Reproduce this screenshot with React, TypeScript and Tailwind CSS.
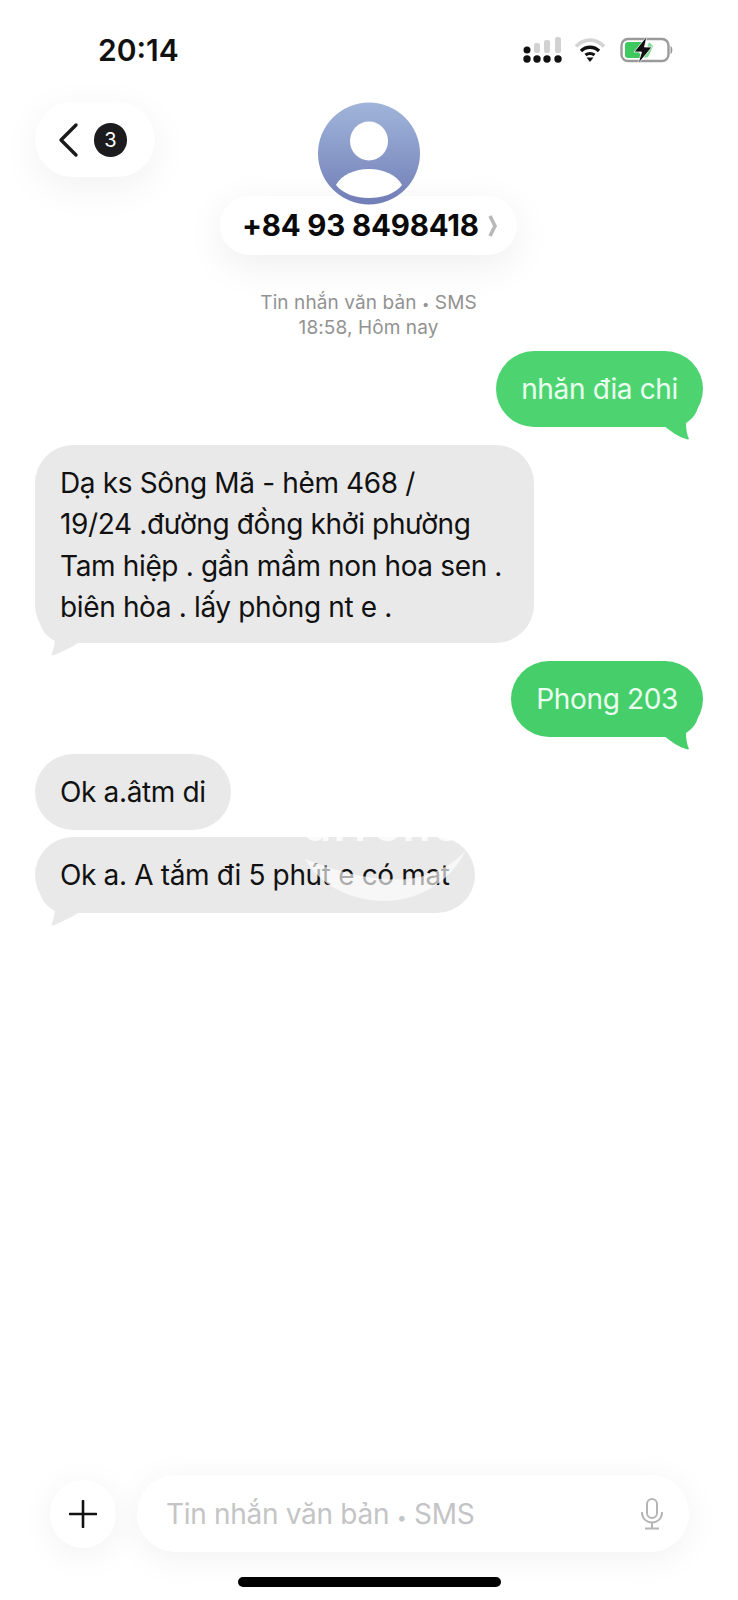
const Tail = ({ side, color }: { side: "left" | "right"; color: string }) =>
  side === "left" ? (
    <svg className="absolute left-0 top-full -mt-[26px]" width="50" height="40" viewBox="0 0 50 40">
      <path d="M5 5 C6 13 12 20 20 24 C19 29 18 34 16.5 38 L18 38.5 C26 35 36 31 46 24 Z" fill={color} />
    </svg>
  ) : (
    <svg className="absolute right-0 top-full -mt-[26px]" width="50" height="40" viewBox="0 0 50 40">
      <path d="M45 5 C44 13 39 18 33 22 C33 28 34 34 36 38 L34.5 38.5 C26 36 18 31 10 24 Z" fill={color} />
    </svg>
  );

const Sent = ({ text, color }: { text: string; color: string }) => (
  <div className="flex justify-end pr-[35px]">
    <div
      className="relative flex h-[76px] items-center rounded-[38px] px-[25px] text-[28px] tracking-[-0.35px] text-[#eafff0]"
      style={{ backgroundColor: color }}
    >
      {text}
      <Tail side="right" color={color} />
    </div>
  </div>
);

const Received = ({ children, tail }: { children: React.ReactNode; tail?: boolean }) => (
  <div className="flex justify-start pl-[35px]">
    <div className="relative flex min-h-[76px] items-center rounded-[38px] bg-[#e9e9e9] px-[25px] text-[28px] leading-[41.3px] tracking-[-0.35px] text-[#111111]">
      {children}
      {tail && <Tail side="left" color="#e9e9e9" />}
    </div>
  </div>
);

const StatusIcons = () => (
  <div className="flex items-center">
    <svg width="40" height="26" viewBox="0 0 40 26">
      <rect x="0.5" y="9.5" width="7" height="7" rx="3.5" fill="#111" />
      <rect x="11" y="6" width="6" height="10" rx="2" fill="#d2d2d2" />
      <rect x="21" y="3" width="6" height="13" rx="2" fill="#d2d2d2" />
      <rect x="32" y="0" width="6" height="16" rx="2" fill="#d2d2d2" />
      <circle cx="4" cy="22" r="3.7" fill="#111" />
      <circle cx="14" cy="22" r="3.7" fill="#111" />
      <circle cx="24" cy="22" r="3.7" fill="#111" />
      <circle cx="35" cy="22" r="3.7" fill="#111" />
    </svg>
    <svg className="ml-[11px]" width="32" height="24" viewBox="0 0 32 24">
      <path d="M2 8.5 C10 0 22 0 30 8.5" stroke="#d4d4d4" strokeWidth="3.6" fill="none" />
      <path d="M7 13 C12 8 20 8 25 13" stroke="#111" strokeWidth="3.4" fill="none" />
      <path d="M11.5 17 C14 15 18 15 20.5 17" stroke="#111" strokeWidth="3.2" fill="none" />
      <path d="M12.5 19.5 L19.5 19.5 L16 24 Z" fill="#111" />
    </svg>
    <svg className="ml-[14px]" width="54" height="28" viewBox="0 0 54 28">
      <rect x="1.5" y="3" width="47" height="22" rx="6.5" fill="none" stroke="#9a9a9a" strokeWidth="2.4" />
      <path d="M5 9 a3 3 0 0 1 3 -3 H24 L18 14 L22 22 H8 a3 3 0 0 1 -3 -3 Z" fill="#3ec95f" />
      <path d="M29 6 L33 10 L31 15 L28 21 L24 22 Z" fill="#7ddc92" />
      <path d="M27 0 L14 16 H21.5 L18 28 L32 11 H24.5 Z" fill="#111" stroke="#fff" strokeWidth="0.8" />
      <path d="M50.5 10 C53 11 53 17 50.5 18 Z" fill="#9a9a9a" />
    </svg>
  </div>
);

const Avatar = () => (
  <svg width="104" height="103" viewBox="0 0 104 103" className="relative z-10 block">
    <defs>
      <linearGradient id="avatarFill" x1="0" y1="0" x2="0" y2="1">
        <stop offset="0" stopColor="#a0b5da" />
        <stop offset="1" stopColor="#727eb7" />
      </linearGradient>
    </defs>
    <circle cx="52" cy="51.5" r="51" fill="url(#avatarFill)" />
    <ellipse cx="52" cy="39" rx="19" ry="19.5" fill="#fff" />
    <path d="M19 83 C24 73 38 67 52 67 C66 67 80 73 85 83 C78 92 65 96 52 96 C39 96 26 92 19 83 Z" fill="#fff" />
  </svg>
);

export default function App() {
  return (
    <div
      className="flex h-[1600px] w-[738px] flex-col overflow-hidden bg-white"
      style={{ fontFamily: "Inter, 'Noto Sans', sans-serif" }}
    >
      {/* status bar */}
      <div className="flex h-[102px] items-start justify-between pl-[98px] pr-[64px] pt-[31px]">
        <span className="text-[30px] font-semibold leading-[38px] text-[#111]">20:14</span>
        <div className="pt-[5px]">
          <StatusIcons />
        </div>
      </div>

      {/* header */}
      <div className="flex items-start pl-[35px]">
        <div className="flex h-[75px] w-[120px] items-center rounded-[38px] bg-white pl-[21px] shadow-[0_10px_40px_rgba(0,0,0,0.06)]">
          <svg width="24" height="36" viewBox="0 0 24 36">
            <path d="M20 3 L5 18 L20 33" stroke="#1a1a1a" strokeWidth="3.4" fill="none" strokeLinecap="round" strokeLinejoin="round" />
          </svg>
          <span className="ml-[14px] flex h-[34px] w-[33px] items-center justify-center rounded-full bg-[#1c1c1e] text-[20px] text-white">
            3
          </span>
        </div>
        <div className="ml-[65px] flex w-[297px] flex-col items-center">
          <Avatar />
          <div className="-mt-[9px] flex h-[59px] w-[297px] items-center rounded-[30px] bg-white pl-[22px] shadow-[0_10px_40px_rgba(0,0,0,0.07)]">
            <span className="text-[29.5px] font-bold tracking-[-0.2px] text-[#0a0a0a]">+84 93 8498418</span>
            <svg className="ml-[9px]" width="10" height="22" viewBox="0 0 10 22">
              <path d="M2 1 L7 11 L2 21" stroke="#b8b8b8" strokeWidth="3.6" fill="none" />
            </svg>
          </div>
          <div className="mt-[36px] whitespace-nowrap text-center text-[19px] leading-[24px] tracking-[0.1px] text-[#929292]">
            <div>
              Tin nhắn văn bản <span className="text-[13px]">•</span> SMS
            </div>
            <div>18:58, Hôm nay</div>
          </div>
        </div>
      </div>

      {/* messages */}
      <div className="mt-[11px] flex flex-col">
        <Sent text="nhăn đia chi" color="#4dd471" />
        <div className="mt-[18px]">
          <Received tail>
            <div className="w-[449px] pb-[15px] pt-[18px]">
              <div>Dạ ks Sông Mã - hẻm 468 /</div>
              <div>19/24 .đường đồng khởi phường</div>
              <div>Tam hiệp . gần mầm non hoa sen .</div>
              <div>biên hòa . lấy phòng nt e .</div>
            </div>
          </Received>
        </div>
        <div className="mt-[18px]">
          <Sent text="Phong 203" color="#45ce69" />
        </div>
        <div className="mt-[17px]">
          <Received>Ok a.âtm di</Received>
        </div>
        <div className="mt-[7px]">
          <Received tail>
            Ok a. A tắm đi 5 phút e có mat
            {/* watermark washed over the bubble */}
            <div className="absolute left-[270px] top-[-36px] text-[46px] font-semibold leading-[46px] tracking-[2px] text-white/80">
              arrenow
            </div>
            <svg className="absolute left-0 top-0" width="480" height="76" viewBox="0 0 480 76">
              <path
                d="M270 22 C285 48 315 64 350 64 C385 64 418 42 430 14 C418 28 400 36 385 40 C360 46 320 42 270 22 Z"
                fill="#ffffff"
                fillOpacity="0.65"
              />
            </svg>
          </Received>
        </div>
      </div>

      <div className="flex-1" />

      {/* composer */}
      <div className="flex items-center pl-[50px] pr-[49px]">
        <div className="flex h-[68px] w-[66px] items-center justify-center rounded-full bg-white shadow-[0_6px_36px_rgba(0,0,0,0.06)]">
          <svg width="28" height="28" viewBox="0 0 28 28">
            <path d="M14 1 V27 M1 14 H27" stroke="#111" strokeWidth="2.6" strokeLinecap="round" />
          </svg>
        </div>
        <div className="ml-[21px] flex h-[77px] flex-1 items-center justify-between rounded-[38px] bg-white pl-[29px] pr-[25px] shadow-[0_6px_36px_rgba(0,0,0,0.06)]">
          <span className="text-[28px] tracking-[-0.3px] text-[#c4c4c6]">
            Tin nhắn văn bản <span className="text-[18px]">•</span> SMS
          </span>
          <svg width="24" height="32" viewBox="0 0 24 32">
            <rect x="7" y="1" width="10" height="19" rx="5" fill="none" stroke="#b5b5b7" strokeWidth="2" />
            <path d="M2 14 C2 28 22 28 22 14 M12 24 V30 M5 30.5 H19" fill="none" stroke="#b5b5b7" strokeWidth="2" />
          </svg>
        </div>
      </div>

      {/* home indicator */}
      <div className="mb-[13px] mt-[25px] flex justify-center">
        <div className="h-[10px] w-[263px] rounded-full bg-black" />
      </div>
    </div>
  );
}
